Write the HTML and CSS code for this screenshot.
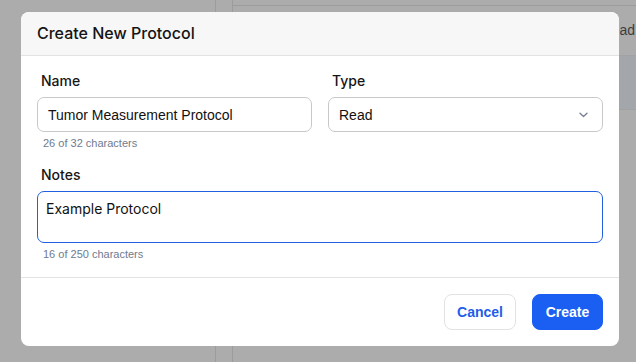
FILE: index.html
```html
<!DOCTYPE html>
<html lang="en">
<head>
<meta charset="utf-8">
<title>Create New Protocol</title>
<link rel="stylesheet" href="styles.css">
</head>
<body>
<div class="app">
  <aside class="side"></aside>
  <div class="rail"></div>
  <main class="main">
    <div class="topbar"></div>
    <div class="toolbar"><span class="tool-text">Read</span></div>
    <div class="band"></div>
  </main>
</div>

<div class="modal" role="dialog" aria-labelledby="dlg-title">
  <header class="modal-header">
    <h2 id="dlg-title" class="modal-title">Create New Protocol</h2>
  </header>
  <div class="modal-body">
    <div class="row">
      <div class="field">
        <label class="label" for="name">Name</label>
        <input id="name" class="input" type="text" value="Tumor Measurement Protocol">
        <div class="hint">26 of 32 characters</div>
      </div>
      <div class="field">
        <label class="label" for="type">Type</label>
        <div class="select-wrap">
          <select id="type" class="input select">
            <option>Read</option>
          </select>
          <svg class="chevron" width="9" height="6" viewBox="0 0 9 6" aria-hidden="true">
            <path d="M1 1.2l3.5 3.3 3.5-3.3" fill="none" stroke="#7a8294" stroke-width="1.4" stroke-linecap="round" stroke-linejoin="round"/>
          </svg>
        </div>
      </div>
    </div>
    <div class="field notes">
      <label class="label" for="notes">Notes</label>
      <textarea id="notes" class="textarea">Example Protocol</textarea>
      <div class="hint">16 of 250 characters</div>
    </div>
  </div>
  <footer class="modal-footer">
    <button class="btn btn-secondary" type="button">Cancel</button>
    <button class="btn btn-primary" type="button">Create</button>
  </footer>
</div>
</body>
</html>
```

FILE: styles.css
```css
* { box-sizing: border-box; }

html, body {
  margin: 0;
  padding: 0;
  width: 636px;
  height: 362px;
  overflow: hidden;
}

body {
  background: #acacac;
  font-family: Inter, "Liberation Sans", sans-serif;
  position: relative;
}

/* dimmed app behind the dialog */
.app {
  display: flex;
  height: 362px;
}
.side {
  width: 216px;
  border-right: 1px solid #9b9c9e;
}
.rail {
  width: 17px;
  border-right: 1px solid #9b9c9e;
}
.main {
  flex: 1;
  display: flex;
  flex-direction: column;
  overflow: hidden;
}
.topbar {
  height: 6px;
  border-bottom: 1px solid #9b9c9e;
}
.toolbar {
  height: 50px;
  display: flex;
  align-items: center;
  justify-content: flex-end;
  padding-bottom: 2px;
  padding-right: 1px;
  border-bottom: 1px solid #a0a2a5;
}
.tool-text {
  font-family: "Liberation Sans", Arial, sans-serif;
  font-size: 14px;
  color: #3d3d3d;
}
.band {
  height: 54px;
  background: #a3a6ab;
  border-bottom: 1px solid #9fa1a4;
}

/* dialog */
.modal {
  position: absolute;
  left: 21px;
  top: 12px;
  width: 598px;
  height: 334px;
  background: #ffffff;
  border-radius: 8px;
  overflow: hidden;
  display: flex;
  flex-direction: column;
}
.modal-header {
  height: 44px;
  background: #f7f7f7;
  border-bottom: 1px solid #e3e3e3;
  padding: 0 16px;
  display: flex;
  align-items: center;
}
.modal-title {
  margin: 0;
  font-size: 16px;
  font-weight: 500;
  color: #141414;
  padding-bottom: 1px;
}

.modal-body {
  padding: 15px 16px 16px;
  border-bottom: 1px solid #e3e3e3;
}
.row {
  display: grid;
  grid-template-columns: 1fr 1fr;
  gap: 16px;
}
.field {
  display: flex;
  flex-direction: column;
}
.notes {
  margin-top: 15px;
}
.label {
  font-size: 14px;
  line-height: 20px;
  font-weight: 500;
  color: #161616;
  padding-left: 4px;
  margin-bottom: 6px;
}
.input {
  height: 35px;
  border: 1px solid #c8c8c8;
  border-radius: 7px;
  padding: 0 10px;
  font-family: "Liberation Sans", Arial, sans-serif;
  font-size: 14px;
  color: #111;
  background: #fff;
  outline: none;
  width: 100%;
}
.select-wrap {
  position: relative;
}
.select {
  appearance: none;
  -webkit-appearance: none;
}
.chevron {
  position: absolute;
  right: 15px;
  top: 15px;
}
.hint {
  font-family: "Liberation Sans", Arial, sans-serif;
  font-size: 11px;
  line-height: 14px;
  color: #6f7b8e;
  padding-left: 6px;
  margin-top: 4px;
}
.textarea {
  height: 52px;
  border: 1px solid #2260df;
  border-radius: 7px;
  padding: 7px 8px;
  font-family: Inter, "Liberation Sans", sans-serif;
  font-size: 14px;
  line-height: 20px;
  color: #111;
  resize: none;
  outline: none;
  width: 100%;
  display: block;
}

.modal-footer {
  flex: 1;
  display: flex;
  justify-content: flex-end;
  align-items: flex-start;
  gap: 16px;
  padding: 16px 16px;
}
.btn {
  height: 36px;
  border-radius: 8px;
  font-family: "Liberation Sans", Arial, sans-serif;
  font-size: 14px;
  font-weight: 700;
  cursor: pointer;
}
.btn-secondary {
  width: 72px;
  background: #fff;
  border: 1px solid #e2e2e2;
  color: #1f5ee8;
}
.btn-primary {
  width: 71px;
  background: #1a5ff2;
  border: 1px solid #1a5ff2;
  color: #fff;
}
```
